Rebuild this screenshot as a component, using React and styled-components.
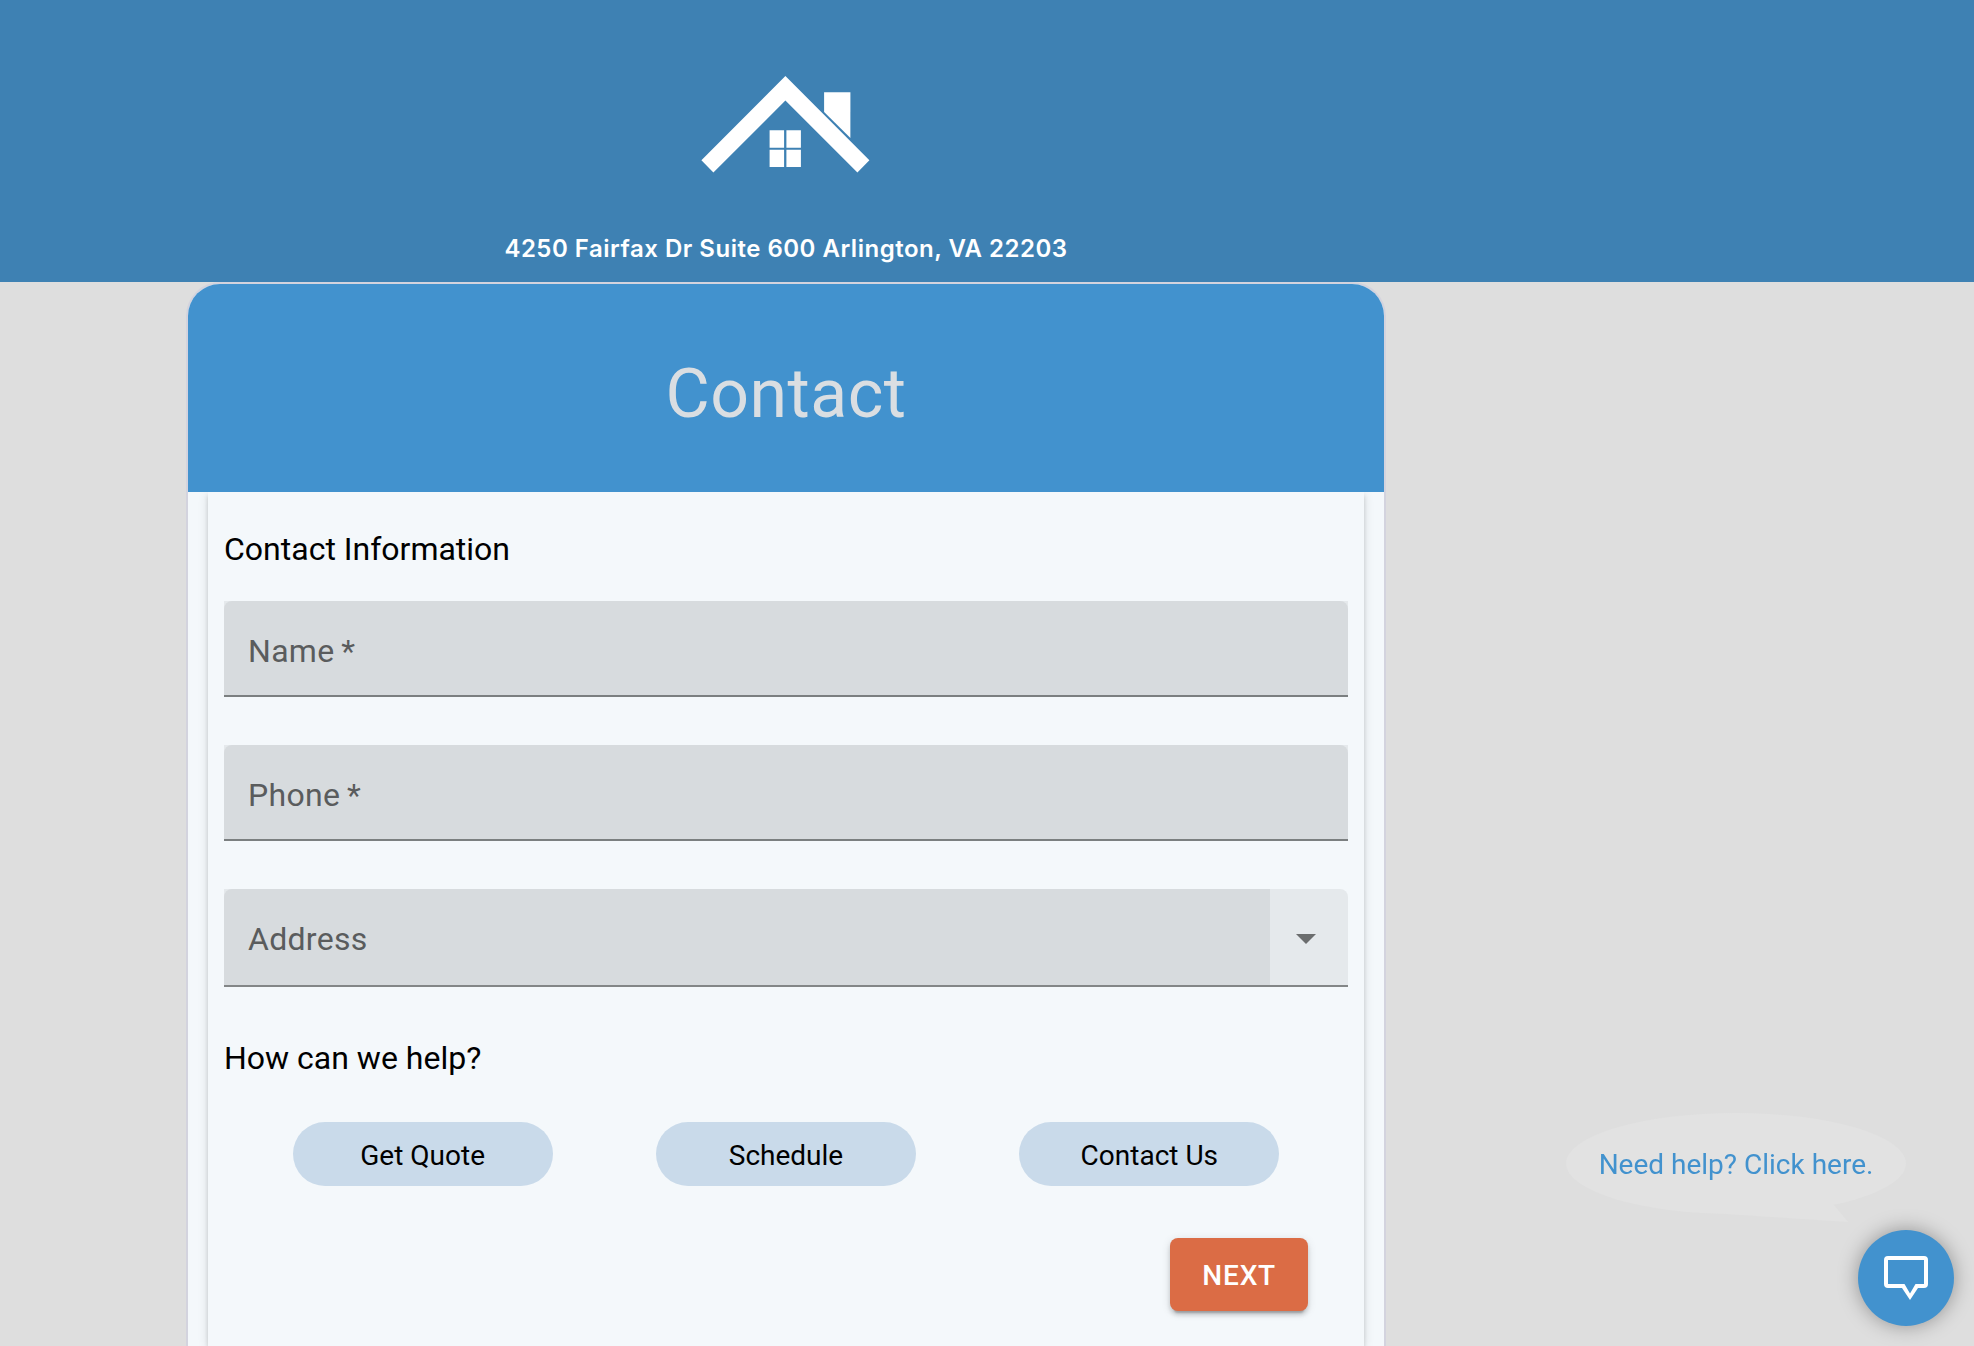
import React, { useId, useState } from "react";
import styled, { createGlobalStyle } from "styled-components";

const GlobalStyle = createGlobalStyle`
  *, *::before, *::after { box-sizing: border-box; }
  body {
    margin: 0;
    background: #dedede;
    color: #000;
    font-family: Roboto, "Liberation Sans", sans-serif;
  }
  button, input, select { font-family: inherit; margin: 0; }
`;

const Page = styled.div`
  display: flex;
  flex-direction: column;
  min-height: 100vh;
`;

const Banner = styled.header`
  display: flex;
  flex-direction: column;
  align-items: center;
  gap: 60px;
  padding: 76px 402px 18px 0;
  background: #3e81b3;
`;

const Logo = styled.svg`
  display: block;
  width: 168px;
  height: 97px;
  overflow: visible;
`;

const StreetAddress = styled.address`
  color: #fff;
  font: normal 600 24px/31px Inter, "Liberation Sans", sans-serif;
  letter-spacing: 0.021em;
`;

const Main = styled.main`
  display: flex;
  flex: 1;
  justify-content: center;
  padding-right: 402px;
`;

const Card = styled.form`
  display: flex;
  flex-direction: column;
  width: 100%;
  max-width: 1200px;
  border: 2px solid #d3d3de;
  border-bottom: 0;
  border-radius: 34px 34px 0 0;
  background: #f4f8fb;
  overflow: hidden;
`;

const CardHeader = styled.div`
  position: relative;
  z-index: 1;
  padding: 74px 16px 62px;
  background: #4292ce;
`;

const Title = styled.h1`
  margin: 0;
  color: #dadee2;
  font-size: 68px;
  font-weight: 400;
  line-height: 72px;
  letter-spacing: 0.0073em;
  text-align: center;
`;

const Panel = styled.div`
  display: flex;
  flex: 1;
  flex-direction: column;
  margin: 0 20px;
  padding: 33px 16px 34px;
  box-shadow: 0 6px 2px -4px rgba(0, 0, 0, 0.2), 0 4px 4px rgba(0, 0, 0, 0.14),
    0 2px 10px rgba(0, 0, 0, 0.12);
`;

const SectionTitle = styled.h2`
  margin: 0;
  font-size: 32px;
  font-weight: 400;
  line-height: 48px;
`;

const FieldList = styled.div`
  display: grid;
  gap: 48px;
  margin: 28px 0 47px;
`;

const Field = styled.div`
  display: grid;
  align-items: center;
  height: ${(p) => (p.$select ? 98 : 96)}px;
  border-bottom: 2px solid ${(p) => (p.$select ? "#838687" : "#7b7f80")};
  border-top-right-radius: ${(p) => (p.$select ? 8 : 0)}px;
  background: #e5e9ec;
  > * { grid-row: 1; grid-column: 1; }
`;

const FieldFill = styled.div`
  align-self: stretch;
  margin-right: ${(p) => (p.$select ? 78 : 0)}px;
  border-radius: ${(p) => (p.$select ? "8px 0 0 0" : "8px 8px 0 0")};
  background: #d7dbde;
`;

const FieldLabel = styled.label`
  padding: ${(p) => (p.$select ? 4 : 6)}px 24px 0;
  color: #5a5c5d;
  font-size: 32px;
  line-height: 38px;
  letter-spacing: 0.0094em;
  pointer-events: none;
  visibility: ${(p) => (p.$hidden ? "hidden" : "visible")};
`;

const control = `
  align-self: stretch;
  width: 100%;
  border: 0;
  outline: 0;
  border-radius: 0;
  padding: 0 24px;
  background: transparent;
  color: #000;
  font-size: 32px;
  appearance: none;
`;

const TextInput = styled.input`${control}`;
const SelectInput = styled.select`${control}`;

const Caret = styled.svg`
  justify-self: end;
  width: 20px;
  height: 10px;
  margin-right: 32px;
  margin-top: 4px;
  pointer-events: none;
`;

const Choices = styled.div`
  display: flex;
  justify-content: space-around;
  margin: 40px 0 52px;
  padding: 0 17px;
`;

const Chip = styled.button`
  width: 260px;
  height: 64px;
  border: 0;
  border-radius: 32px;
  padding: 2px 0 0;
  background: #c9daea;
  color: #000;
  font-size: 28px;
  cursor: pointer;
`;

const Actions = styled.div`
  display: flex;
  justify-content: flex-end;
  padding-right: 40px;
`;

const NextButton = styled.button`
  height: 73px;
  border: 0;
  border-radius: 8px;
  padding: 1px 32px 0;
  background: #db6c45;
  color: #fff;
  font-size: 28px;
  font-weight: 500;
  letter-spacing: 0.0286em;
  text-transform: uppercase;
  cursor: pointer;
  box-shadow: 0 6px 2px -4px rgba(0, 0, 0, 0.2), 0 4px 4px rgba(0, 0, 0, 0.14),
    0 2px 10px rgba(0, 0, 0, 0.12);
`;

const ChatDock = styled.aside`
  position: fixed;
  right: 20px;
  bottom: 20px;
  display: flex;
  flex-direction: column;
  align-items: flex-end;
  gap: 16px;
`;

const HelpBubble = styled.a`
  position: relative;
  display: grid;
  place-items: center;
  width: 340px;
  height: 101px;
  margin-right: 48px;
  border-radius: 50%;
  background: #e2e2e2;
  color: #4292ce;
  font-size: 28px;
  text-decoration: none;

  &::after {
    content: "";
    position: absolute;
    top: 85px;
    left: 160px;
    width: 122px;
    height: 24px;
    background: #e2e2e2;
    clip-path: polygon(0 16px, 122px 24px, 107px 6px, 90px 0, 0 0);
  }
`;

const BubbleText = styled.span`
  position: relative;
  z-index: 1;
  padding-top: 2px;
`;

const ChatButton = styled.button`
  display: grid;
  place-items: center;
  width: 96px;
  height: 96px;
  border: 0;
  border-radius: 50%;
  padding: 0;
  background: #4292ce;
  cursor: pointer;
  box-shadow: 0 0 20px rgba(0, 0, 0, 0.35);
`;

function HouseLogo() {
  return (
    <Logo viewBox="0.6 0 168 97" fill="#fff" role="img" aria-label="House">
      <path d="M84 0 168 84.300 156 96.500 84 24.500 12 96.500 0 84.300Z" />
      <path d="M122.700 16.300H149V62L122.700 36Z" />
      <path d="M68.200 54.300H82.700V71.700H68.200ZM85 54.300H99.500V71.700H85ZM68.200 73.700H82.700V91H68.200ZM85 73.700H99.500V91H85Z" />
    </Logo>
  );
}

function TextField({ label, type, required }) {
  const id = useId();
  const [value, setValue] = useState("");
  return (
    <Field>
      <FieldFill />
      <FieldLabel htmlFor={id} $hidden={value !== ""}>
        {label}
        {required && "\u2009*"}
      </FieldLabel>
      <TextInput
        id={id}
        type={type}
        required={required}
        value={value}
        onChange={(e) => setValue(e.target.value)}
      />
    </Field>
  );
}

function SelectField({ label, options }) {
  const id = useId();
  const [value, setValue] = useState("");
  return (
    <Field $select>
      <FieldFill $select />
      <FieldLabel htmlFor={id} $select $hidden={value !== ""}>
        {label}
      </FieldLabel>
      <SelectInput id={id} value={value} onChange={(e) => setValue(e.target.value)}>
        <option value="" />
        {options.map((o) => (
          <option key={o}>{o}</option>
        ))}
      </SelectInput>
      <Caret viewBox="0 0 20 10" aria-hidden="true">
        <path d="M0 0H20L10 10Z" fill="#6b6d6e" />
      </Caret>
    </Field>
  );
}

export default function App() {
  return (
    <>
      <GlobalStyle />
      <Page>
        <Banner>
          <HouseLogo />
          <StreetAddress>4250 Fairfax Dr Suite 600 Arlington, VA 22203</StreetAddress>
        </Banner>
        <Main>
          <Card onSubmit={(e) => e.preventDefault()}>
            <CardHeader>
              <Title>Contact</Title>
            </CardHeader>
            <Panel>
              <SectionTitle>Contact Information</SectionTitle>
              <FieldList>
                <TextField label="Name" type="text" required />
                <TextField label="Phone" type="tel" required />
                <SelectField label="Address" options={[]} />
              </FieldList>
              <SectionTitle>How can we help?</SectionTitle>
              <Choices>
                {["Get Quote", "Schedule", "Contact Us"].map((c) => (
                  <Chip key={c} type="button">
                    {c}
                  </Chip>
                ))}
              </Choices>
              <Actions>
                <NextButton type="submit">Next</NextButton>
              </Actions>
            </Panel>
          </Card>
        </Main>
      </Page>
      <ChatDock>
        <HelpBubble href="#chat">
          <BubbleText>Need help? Click here.</BubbleText>
        </HelpBubble>
        <ChatButton type="button" aria-label="Open chat">
          <svg width="44" height="44" viewBox="0 0 44 44" fill="#fff" fillRule="evenodd" aria-hidden="true">
            <path d="M4 0H40Q44 0 44 4V28Q44 32 40 32H34L26 44 18 32H4Q0 32 0 28V4Q0 0 4 0ZM4 4V28H20.500L26 37.500 31.500 28H40V4Z" />
          </svg>
        </ChatButton>
      </ChatDock>
    </>
  );
}
